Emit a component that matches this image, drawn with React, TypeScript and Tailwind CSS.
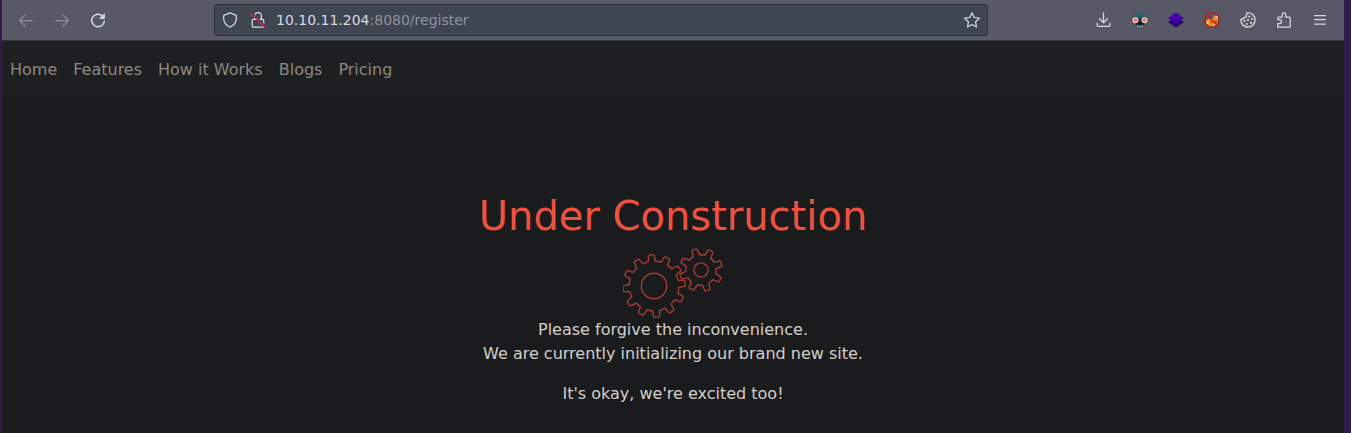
import React from "react";

function gear(cx: number, cy: number, outer: number, root: number, teeth: number, start: number, baseHalf: number, tipHalf: number) {
  const pt = (r: number, deg: number) => {
    const a = (deg * Math.PI) / 180;
    return `${(cx + r * Math.cos(a)).toFixed(2)} ${(cy + r * Math.sin(a)).toFixed(2)}`;
  };
  let d = "";
  for (let i = 0; i < teeth; i++) {
    const a = start + (i * 360) / teeth;
    d += i === 0 ? `M${pt(root, a - baseHalf)}` : `A${root} ${root} 0 0 1 ${pt(root, a - baseHalf)}`;
    d += `L${pt(outer - 1.3, a - tipHalf)}Q${pt(outer, a - tipHalf)} ${pt(outer, a - tipHalf * 0.6)}`;
    d += `L${pt(outer, a + tipHalf * 0.6)}Q${pt(outer, a + tipHalf)} ${pt(outer - 1.3, a + tipHalf)}L${pt(root, a + baseHalf)}`;
  }
  return `${d}A${root} ${root} 0 0 1 ${pt(root, start - baseHalf)}Z`;
}

function Icon({ children, className = "" }: { children: React.ReactNode; className?: string }) {
  return (
    <svg
      width="16"
      height="16"
      viewBox="0 0 16 16"
      fill="none"
      stroke="currentColor"
      strokeWidth="1.25"
      strokeLinecap="round"
      strokeLinejoin="round"
      className={`block shrink-0 ${className}`}
    >
      {children}
    </svg>
  );
}

function Toolbar() {
  return (
    <header className="flex h-[41px] items-center border-b border-[#303540] bg-[#585966] text-[#d3dae3]">
      <div className="flex w-[212px] shrink-0 gap-5 pl-4">
        <Icon className="text-[#8b8d9a]">
          <path d="M14.5 8.500h-13M7 3L1.500 8.500 7 14" />
        </Icon>
        <Icon className="text-[#8b8d9a]">
          <path d="M1.500 8.500h13M9 3l5.500 5.500L9 14" />
        </Icon>
        <Icon>
          <path d="M12.700 4.200A6.300 6.300 0 1 0 14.300 9.300" strokeWidth="1.500" />
          <path d="M14.400 2.200v4.200h-4.200z" fill="currentColor" strokeWidth="1" />
        </Icon>
      </div>

      <div className="flex h-8 w-[774px] shrink-0 items-center rounded-[3px] border border-[#2b2e39] bg-[#404552] pl-[7px] pr-[7px]">
        <Icon>
          <path d="M8 .8L14.200 3.300C15 8.300 12.800 13 8 15.200 3.200 13 1 8.300 1.800 3.300z" />
        </Icon>
        <Icon className="ml-3">
          <path d="M4.800 7V4a3.300 3.300 0 0 1 6.600 0v3M3.300 7.300h9.400a1 1 0 0 1 1 1v5.900a1 1 0 0 1-1 1H3.300a1 1 0 0 1-1-1V8.300a1 1 0 0 1 1-1z" />
          <path d="M2.200 1.600l13 13" stroke="#404552" strokeWidth="2.500" />
          <path d="M1.400 2l13 13" stroke="#e22850" strokeWidth="1.300" />
        </Icon>
        <span className="ml-[10px] flex-1 whitespace-nowrap text-[14px] leading-5 text-[#8f939e]">
          <span className="text-[#d3dae3]">10.10.11.204</span>:8080/register
        </span>
        <Icon>
          <path d="M8 .8l2.200 4.700 5.100.7-3.700 3.600.9 5.200L8 12.500 3.500 15l.9-5.200L.7 6.200l5.100-.7z" />
        </Icon>
      </div>

      <div className="ml-[108px] flex gap-5">
        <Icon>
          <path d="M7.500 .8v10M3.500 6.800l4 4 4-4M1.200 11.500v1.800q0 1 1 1h10.800q1 0 1-1v-1.800" strokeWidth="1.300" />
        </Icon>
        <Icon>
          <g stroke="none">
            <path d="M1.200 7Q1 1.200 8 1.200T14.800 7l-1.600 3.500L10 14.800H6L2.800 10.500z" fill="#28606e" />
            <path d="M5 6.500h6v3H5z" fill="#21343c" />
            <path d="M2.500 12.500L5.500 9.500h5l3 3-2.500.8-1-.8H6l-1 .8z" fill="#14171d" />
            <path d="M5 12.500h6v2.700H5z" fill="#68919c" />
            <path d="M6.500 12h3l1 1.500h-5z" fill="#14171d" />
          </g>
          <circle cx="3.500" cy="8.200" r="2.400" fill="#ed7356" stroke="#f0d5cd" strokeWidth="1.100" />
          <circle cx="12.500" cy="8.200" r="2.400" fill="#ed7356" stroke="#f0d5cd" strokeWidth="1.100" />
        </Icon>
        <Icon>
          <g stroke="none">
            <path d="M0 10L8 4.700 16 10l-8 5.700z" fill="#21086d" />
            <path d="M0 6L8 .3 16 6l-8 5.700z" fill="#4706ad" />
          </g>
        </Icon>
        <Icon>
          <g stroke="none">
            <path d="M2 8.500L5 6.500l3 .5 2-2.500 3-2 1.200 4-.7 5-3.500 2.800-5 .2-3-3z" fill="#e28d1d" />
            <path d="M2.300 8.500L5 10l-1 2.500zM11 4.500l2.300-1 .7 3.500z" fill="#eee2d0" />
            <path d="M6.500 9.500l2 .6-1 1.200zM10.500 9.500l2-1.200v1.600z" fill="#49301e" />
            <path d="M8.500 13l3.500-1.500-2 2.500z" fill="#f4d49b" />
          </g>
          <circle cx="8" cy="8" r="7.300" stroke="#c8141a" strokeWidth="1.300" />
          <path d="M3 3l10 10" stroke="#c8141a" strokeWidth="1.300" />
        </Icon>
        <Icon className="text-[#d8d8d8]">
          <path d="M6.800 1c4.600-.8 8.200 2.500 8.200 6.900A7.100 7.100 0 0 1 7.900 15C3.500 15 .5 11.500 1 7.100c1.400.7 2.700.1 2.700-1.500 1.800.2 3-.7 2.600-2.300.5-.7.6-1.400.5-2.300z" strokeWidth="1.400" />
          <g fill="currentColor" stroke="none">
            <circle cx="9.200" cy="4.500" r="1.100" />
            <circle cx="12" cy="7" r="1" />
            <circle cx="8" cy="8" r="1.100" />
            <circle cx="4.500" cy="9" r="1.100" />
            <circle cx="11" cy="10.800" r="1.100" />
            <circle cx="6.700" cy="12" r="1.100" />
          </g>
        </Icon>
        <Icon>
          <path d="M1.800 15.200v-3.700h1.700a2 2 0 0 0 0-4H1.800V6q0-1 1-1h3.400V2.700a1.800 1.800 0 0 1 3.600 0V5h3.400q1 0 1 1v8.200q0 1-1 1z" />
        </Icon>
        <Icon>
          <path d="M2.500 3.500h11M2.500 7.500h11M2.500 12h11" />
        </Icon>
      </div>
    </header>
  );
}

const links = ["Home", "Features", "How it Works", "Blogs", "Pricing"];

export default function App() {
  return (
    <div className="h-[433px] overflow-hidden border-l-2 border-r-[7px] border-[#2f1c4b] bg-[#1a1b1d] font-['DejaVu_Sans',sans-serif]">
      <Toolbar />
      <nav className="flex h-14 items-center gap-4 bg-[#1e1f21] px-2 pt-0.5 text-base text-[#8b8884]">
        {links.map((label) => (
          <a key={label} className="whitespace-nowrap">
            {label}
          </a>
        ))}
      </nav>
      <main className="flex flex-col items-center pt-[95px] text-center text-base text-[#d3cfc9]">
        <h1 className="text-[40px] leading-[48px] text-[#ef5140]">Under Construction</h1>
        <svg width="100" height="70" viewBox="0 0 100 70" fill="none" stroke="#a43c32" strokeWidth="1.4" strokeLinejoin="round" className="mt-2 block">
          <path d={gear(31, 38, 31.2, 24.8, 12, -95, 8.5, 5.8)} />
          <circle cx="31" cy="38" r="12.700" />
          <path d={gear(78, 22, 21.500, 15.200, 8, -108, 13, 8)} />
          <circle cx="78" cy="22" r="7.100" />
        </svg>
        <p className="leading-6">
          Please forgive the inconvenience.
          <br />
          We are currently initializing our brand new site.
        </p>
        <p className="mt-4 leading-6">It's okay, we're excited too!</p>
      </main>
    </div>
  );
}
